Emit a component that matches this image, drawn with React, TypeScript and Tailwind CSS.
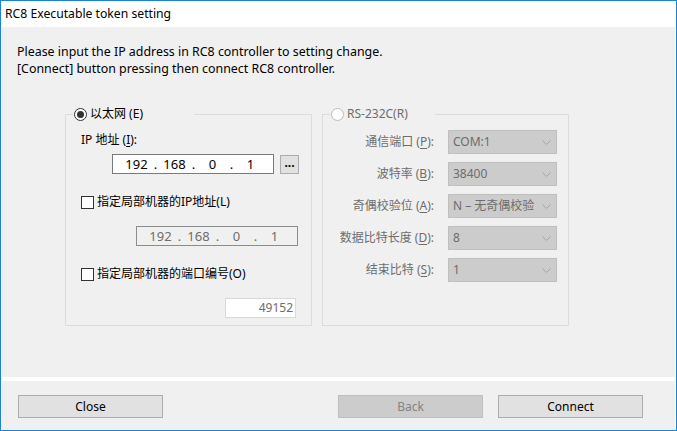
import React from 'react'

const font = { fontFamily: '"Noto Sans", "Noto Sans CJK SC", sans-serif' }

function Acc({ children }: { children: React.ReactNode }) {
  return <span className="underline underline-offset-2">{children}</span>
}

function Radio({ checked, disabled }: { checked?: boolean; disabled?: boolean }) {
  return (
    <span
      className={
        'flex h-[13px] w-[13px] shrink-0 items-center justify-center rounded-full border bg-white ' +
        (disabled ? 'border-[#bcbcbc]' : 'border-[#333333]')
      }
    >
      {checked && <span className="h-[7px] w-[7px] rounded-full bg-[#333333]" />}
    </span>
  )
}

function Check() {
  return <span className="h-[13px] w-[13px] shrink-0 border border-[#333333] bg-white" />
}

function IpBox({ disabled }: { disabled?: boolean }) {
  const parts = ['192', '168', '0', '1']
  return (
    <div
      className={
        'flex h-[20px] w-[162px] items-center border pl-[8px] text-[13px] ' +
        (disabled ? 'border-[#8c8c8c] bg-[#f0f0f0] text-[#6d6d6d]' : 'border-[#7a7a7a] bg-white text-black')
      }
    >
      {parts.map((p, i) => (
        <React.Fragment key={i}>
          <span className="w-[31px] text-center">{p}</span>
          {i < 3 && <span className="w-[7px] text-center">.</span>}
        </React.Fragment>
      ))}
    </div>
  )
}

function Combo({ value }: { value: string }) {
  return (
    <div className="flex h-[24px] w-[109px] items-center justify-between border border-[#bfbfbf] bg-[#cccccc] pl-[4px] pr-[5px] text-[#6d6d6d]">
      <span className="whitespace-nowrap">{value}</span>
      <svg width="9" height="5" viewBox="0 0 9 5" fill="none" className="shrink-0">
        <path d="M0.5 0.5 L4.5 4.5 L8.5 0.5" stroke="#a6a6a6" strokeWidth="1" />
      </svg>
    </div>
  )
}

function Btn({ label, disabled }: { label: string; disabled?: boolean }) {
  return (
    <button
      className={
        'h-[23px] w-[145px] border text-[12px] ' +
        (disabled ? 'border-[#bfbfbf] bg-[#cccccc] text-[#838383]' : 'border-[#adadad] bg-[#e1e1e1] text-black')
      }
    >
      {label}
    </button>
  )
}

const serial: [string, string, string, string][] = [
  ['通信端口 (', 'P', '):', 'COM:1'],
  ['波特率 (', 'B', '):', '38400'],
  ['奇偶校验位 (', 'A', '):', 'N – 无奇偶校验'],
  ['数据比特长度 (', 'D', '):', '8'],
  ['结束比特 (', 'S', '):', '1'],
]

export default function App() {
  return (
    <div style={font} className="flex h-[431px] w-[677px] flex-col border border-[#1883d7] bg-white text-[12px] leading-[16px] text-black">
      <div className="flex h-[26px] items-center pl-[4px] text-[12.2px]">RC8 Executable token setting</div>

      <div className="mx-[1px] flex h-[350px] flex-col bg-[#f0f0f0] pl-[15px] pt-[16px]">
        <p className="text-[12.4px] leading-[17px]">Please input the IP address in RC8 controller to setting change.</p>
        <p className="text-[12.4px] leading-[17px]">[Connect] button pressing then connect RC8 controller.</p>

        <div className="ml-[48px] mt-[29px] flex gap-[10px]">
          <fieldset className="h-[220px] w-[247px] border border-[#dcdcdc] px-0">
            <legend className="ml-[7px] flex h-[16px] w-[121px] items-center gap-[3px] pl-[1px]">
              <Radio checked />
              <span>以太网 (E)</span>
            </legend>
            <div className="flex flex-col pl-[15px]">
              <div className="mt-[10px]">
                IP 地址 (<Acc>I</Acc>):
              </div>
              <div className="ml-[31px] mt-[6px] flex items-center gap-[6px]">
                <IpBox />
                <span className="flex h-[19px] w-[19px] items-center justify-center border border-[#adadad] bg-[#e1e1e1] pb-[3px] text-[12px] font-bold leading-none">...</span>
              </div>
              <div className="mt-[20px] flex items-center gap-[3px]">
                <Check />
                <span>指定局部机器的IP地址(L)</span>
              </div>
              <div className="ml-[55px] mt-[16px]">
                <IpBox disabled />
              </div>
              <div className="mt-[20px] flex items-center gap-[3px]">
                <Check />
                <span>指定局部机器的端口编号(O)</span>
              </div>
              <div className="ml-[144px] mt-[16px] flex h-[20px] w-[71px] items-center justify-end border border-[#d9d9d9] bg-white pr-[2px] text-[#6d6d6d]">
                49152
              </div>
            </div>
          </fieldset>

          <fieldset className="h-[220px] w-[247px] border border-[#dcdcdc] px-0">
            <legend className="ml-[7px] flex h-[16px] w-[105px] items-center gap-[3px] pl-[1px] text-[#6d6d6d]">
              <Radio disabled />
              <span>RS-232C(R)</span>
            </legend>
            <div className="mt-[8px] flex flex-col gap-[8px]">
              {serial.map(([a, k, b, v]) => (
                <div key={k} className="flex h-[24px] items-center">
                  <span className="w-[111px] whitespace-nowrap text-right text-[#6d6d6d]">
                    {a}
                    <Acc>{k}</Acc>
                    {b}
                  </span>
                  <span className="ml-[14px]">
                    <Combo value={v} />
                  </span>
                </div>
              ))}
            </div>
          </fieldset>
        </div>
      </div>

      <div className="h-[4px]" />

      <div className="mx-[1px] flex flex-1 items-start bg-[#f0f0f0] pl-[16px] pt-[14px]">
        <Btn label="Close" />
        <span className="ml-[175px]">
          <Btn label="Back" disabled />
        </span>
        <span className="ml-[15px]">
          <Btn label="Connect" />
        </span>
      </div>
    </div>
  )
}
